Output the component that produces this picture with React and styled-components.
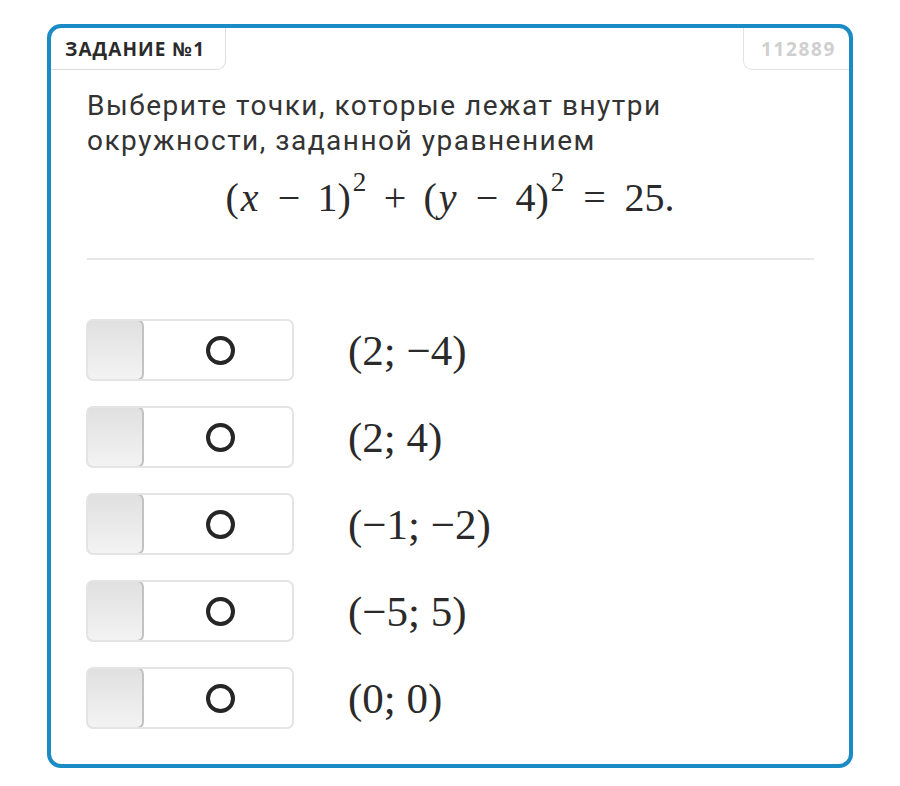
import React from 'react';
import styled, { createGlobalStyle } from 'styled-components';

const GlobalStyle = createGlobalStyle`
  html, body {
    margin: 0;
    padding: 0;
    background: #ffffff;
  }
  body {
    font-family: Roboto, "Liberation Sans", sans-serif;
  }
`;

const points = ['(2; −4)', '(2; 4)', '(−1; −2)', '(−5; 5)', '(0; 0)'];

const Page = () => {
  return (
    <Wrapper>
      <GlobalStyle />
      <Card>
        <CardHeader>
          <TaskTab>ЗАДАНИЕ №1</TaskTab>
          <IdTab>112889</IdTab>
        </CardHeader>
        <Question>
          Выберите точки, которые лежат внутри окружности, заданной уравнением
        </Question>
        <Formula>
          <Paren>(</Paren>
          <Var>x</Var>
          <Bin>−</Bin>
          <Num>1</Num>
          <Paren>)</Paren>
          <Sup>2</Sup>
          <Bin>+</Bin>
          <Paren>(</Paren>
          <Var>y</Var>
          <Bin>−</Bin>
          <Num>4</Num>
          <Paren>)</Paren>
          <Sup>2</Sup>
          <Rel>=</Rel>
          <Num>25.</Num>
        </Formula>
        <Divider />
        <OptionList>
          {points.map((p, index) => (
            <OptionRow key={index}>
              <Toggle>
                <Knob />
                <ToggleMark />
              </Toggle>
              <PointLabel>{p}</PointLabel>
            </OptionRow>
          ))}
        </OptionList>
      </Card>
    </Wrapper>
  );
};

const Wrapper = styled.div`
  width: 900px;
  height: 786px;
  padding: 24px 0 0 47px;
  box-sizing: border-box;
`;

const Card = styled.div`
  width: 806px;
  height: 744px;
  box-sizing: border-box;
  border: 4px solid #1b8bc6;
  border-radius: 14px;
  overflow: hidden;
  display: flex;
  flex-direction: column;
`;

const CardHeader = styled.div`
  display: flex;
  justify-content: space-between;
  align-items: flex-start;
  height: 42px;
`;

const TaskTab = styled.div`
  width: 175px;
  height: 42px;
  box-sizing: border-box;
  border-right: 1px solid #dedede;
  border-bottom: 1px solid #dedede;
  border-bottom-right-radius: 9px;
  padding-left: 14px;
  display: flex;
  align-items: center;
  font-family: "Open Sans", Roboto, sans-serif;
  font-weight: 700;
  font-size: 19px;
  color: #2a2a2a;
  letter-spacing: 1.1px;
`;

const IdTab = styled.div`
  width: 106px;
  height: 42px;
  box-sizing: border-box;
  border-left: 1px solid #e2e2e2;
  border-bottom: 1px solid #e2e2e2;
  border-bottom-left-radius: 9px;
  display: flex;
  align-items: center;
  justify-content: center;
  padding-left: 4px;
  font-family: "Open Sans", Roboto, sans-serif;
  font-weight: 700;
  font-size: 19px;
  letter-spacing: 1.6px;
  color: #cfcfcf;
`;

const Question = styled.div`
  margin: 18px 0 0 36px;
  width: 640px;
  font-family: Roboto, "Liberation Sans", sans-serif;
  font-size: 28px;
  line-height: 35px;
  letter-spacing: 1.5px;
  color: #333333;
`;

const Formula = styled.div`
  margin-top: 14px;
  display: flex;
  justify-content: center;
  align-items: baseline;
  font-family: "Liberation Serif", "DejaVu Serif", serif;
  font-size: 40px;
  line-height: 52px;
  color: #2a2a2a;
`;

const Paren = styled.span``;

const Var = styled.span`
  font-style: italic;
  padding: 0 2px;
`;

const Num = styled.span``;

const Sup = styled.span`
  font-size: 0.68em;
  position: relative;
  top: -0.72em;
  margin-left: 2px;
`;

const Bin = styled.span`
  margin: 0 0.43em;
`;

const Rel = styled.span`
  margin: 0 0.47em;
`;

const Divider = styled.div`
  margin: 30px 0 0 36px;
  width: 727px;
  height: 2px;
  background: #e6e6e6;
`;

const OptionList = styled.div`
  margin: 59px 0 0 35px;
  display: flex;
  flex-direction: column;
  gap: 25px;
`;

const OptionRow = styled.div`
  display: flex;
  align-items: center;
`;

const Toggle = styled.div`
  width: 208px;
  height: 62px;
  box-sizing: border-box;
  border: 2px solid #e4e4e4;
  border-radius: 7px;
  background: #ffffff;
  display: flex;
  align-items: stretch;
  overflow: hidden;
`;

const Knob = styled.div`
  width: 58px;
  margin: -2px 0 -2px -2px;
  box-sizing: border-box;
  border: 2px solid #c2c2c2;
  border-radius: 7px;
  background: linear-gradient(180deg, #e0e0e0 0%, #f3f3f3 100%);
`;

const ToggleMark = styled.div`
  flex: 1;
  display: flex;
  align-items: center;
  justify-content: center;
  padding-left: 4px;
  &::before {
    content: '';
    width: 21px;
    height: 21px;
    border: 4.5px solid #262626;
    border-radius: 50%;
  }
`;

const PointLabel = styled.div`
  margin-left: 54px;
  font-family: "Liberation Serif", "DejaVu Serif", serif;
  font-size: 43px;
  color: #2a2a2a;
`;

export default Page;
